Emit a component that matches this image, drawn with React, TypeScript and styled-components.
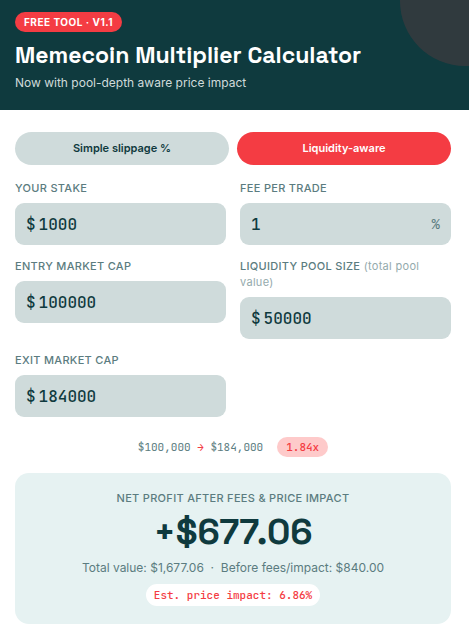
import React, { useState } from "react";
import styled, { createGlobalStyle } from "styled-components";

const teal = "#0f3a3e";
const red = "#f43c43";
const muted = "#5b7c80";
const mono = `"JetBrains Mono", "DejaVu Sans Mono", monospace`;
const display = `"Space Grotesk", Inter, sans-serif`;

const GlobalStyle = createGlobalStyle`
  *, *::before, *::after { box-sizing: border-box; }
  body {
    margin: 0;
    background: #fff;
    color: ${teal};
    font-family: Inter, sans-serif;
  }
`;

const Header = styled.header`
  position: relative;
  overflow: hidden;
  padding: 12px 18px 18px 15px;
  background: ${teal};
  color: #fff;

  &::after {
    content: "";
    position: absolute;
    top: -64px;
    right: -61px;
    width: 130px;
    height: 130px;
    border-radius: 50%;
    background: ${red};
    opacity: 0.15;
  }
`;

const Badge = styled.span`
  display: inline-block;
  padding: 0 9px;
  border-radius: 10px;
  background: ${red};
  font-size: 10px;
  font-weight: 700;
  line-height: 20px;
  letter-spacing: 0.5px;
  vertical-align: top;
`;

const Title = styled.h1`
  margin: 8px 0 4px;
  font-family: ${display};
  font-size: 23px;
  font-weight: 700;
  line-height: 30px;
`;

const Subtitle = styled.p`
  margin: 0;
  color: #cfdbdb;
  font-size: 12px;
  line-height: 18px;
`;

const Body = styled.main`
  padding: 22px 18px 9px 15px;
`;

const Modes = styled.div`
  display: grid;
  grid-template-columns: 1fr 1fr;
  gap: 8px;
  margin-bottom: 15px;
`;

const ModeButton = styled.button<{ $active: boolean }>`
  height: 33px;
  padding: 0 12px 2px;
  border: 0;
  border-radius: 17px;
  background: ${(p) => (p.$active ? red : "#cfdbdb")};
  color: ${(p) => (p.$active ? "#fff" : teal)};
  font: 600 11px Inter, sans-serif;
  cursor: pointer;
`;

const Fields = styled.div`
  display: grid;
  grid-template-columns: repeat(2, minmax(0, 1fr));
  align-items: start;
  gap: 13px 14px;
`;

const FieldLabel = styled.label`
  display: block;
  margin-bottom: 7px;
  color: ${muted};
  font-size: 11px;
  font-weight: 500;
  line-height: 16px;
  letter-spacing: 0.3px;
`;

const Hint = styled.span`
  color: #94aaac;
  font-weight: 400;
`;

const InputBox = styled.div`
  display: flex;
  align-items: center;
  gap: 3px;
  height: 42px;
  padding: 0 11px;
  border-radius: 9px;
  background: #cfdbdb;
  font-family: ${mono};
  font-size: 16px;
  font-weight: 500;
`;

const Suffix = styled.span`
  color: ${muted};
  font-size: 14px;
  font-weight: 400;
`;

const Input = styled.input`
  flex: 1;
  min-width: 0;
  padding: 0;
  border: 0;
  outline: 0;
  background: transparent;
  color: ${teal};
  font: inherit;
`;

const Summary = styled.div`
  display: flex;
  align-items: center;
  justify-content: center;
  gap: 14px;
  margin: 20px 0 16px;
  color: ${muted};
  font-family: ${mono};
  font-size: 11px;
  line-height: 20px;
`;

const Arrow = styled.span`
  color: ${red};
`;

const Multiple = styled.span`
  padding: 0 9px;
  border-radius: 10px;
  background: #fecaca;
  color: ${red};
  font-size: 11px;
  font-weight: 500;
`;

const Result = styled.section`
  display: flex;
  flex-direction: column;
  align-items: center;
  padding: 17px 16px 18px;
  border-radius: 14px;
  background: #e6f2f2;
  text-align: center;
`;

const ResultLabel = styled.h2`
  margin: 0;
  color: ${muted};
  font-size: 11px;
  font-weight: 500;
  line-height: 16px;
  letter-spacing: 0.3px;
`;

const Amount = styled.output`
  font-family: ${display};
  font-size: 36px;
  font-weight: 700;
  line-height: 52px;
`;

const Totals = styled.p`
  margin: 0 0 7px;
  color: ${muted};
  font-size: 12px;
  line-height: 19px;
`;

const Impact = styled.span`
  padding: 0 8px;
  border-radius: 11px;
  background: #fff;
  color: ${red};
  font-family: ${mono};
  font-size: 11px;
  font-weight: 500;
  line-height: 22px;
`;

type FieldProps = {
  id: string;
  label: string;
  initial: string;
  hint?: string;
  prefix?: string;
  suffix?: string;
};

function Field({ id, label, initial, hint, prefix, suffix }: FieldProps) {
  const [value, setValue] = useState(initial);
  return (
    <div>
      <FieldLabel htmlFor={id}>
        {label}
        {hint && <Hint> {hint}</Hint>}
      </FieldLabel>
      <InputBox>
        {prefix && <span>{prefix}</span>}
        <Input
          id={id}
          inputMode="decimal"
          value={value}
          onChange={(e) => setValue(e.target.value)}
        />
        {suffix && <Suffix>{suffix}</Suffix>}
      </InputBox>
    </div>
  );
}

export default function App() {
  const [mode, setMode] = useState("liquidity");
  return (
    <>
      <GlobalStyle />
      <Header>
        <Badge>FREE TOOL · V1.1</Badge>
        <Title>Memecoin Multiplier Calculator</Title>
        <Subtitle>Now with pool-depth aware price impact</Subtitle>
      </Header>
      <Body>
        <Modes>
          <ModeButton
            type="button"
            $active={mode === "simple"}
            aria-pressed={mode === "simple"}
            onClick={() => setMode("simple")}
          >
            Simple slippage %
          </ModeButton>
          <ModeButton
            type="button"
            $active={mode === "liquidity"}
            aria-pressed={mode === "liquidity"}
            onClick={() => setMode("liquidity")}
          >
            Liquidity-aware
          </ModeButton>
        </Modes>
        <Fields>
          <Field id="stake" label="YOUR STAKE" initial="1000" prefix="$" />
          <Field id="fee" label="FEE PER TRADE" initial="1" suffix="%" />
          <Field id="entry" label="ENTRY MARKET CAP" initial="100000" prefix="$" />
          <Field
            id="pool"
            label="LIQUIDITY POOL SIZE"
            hint="(total pool value)"
            initial="50000"
            prefix="$"
          />
          <Field id="exit" label="EXIT MARKET CAP" initial="184000" prefix="$" />
        </Fields>
        <Summary>
          <span>
            $100,000 <Arrow>→</Arrow> $184,000
          </span>
          <Multiple>1.84x</Multiple>
        </Summary>
        <Result>
          <ResultLabel>NET PROFIT AFTER FEES &amp; PRICE IMPACT</ResultLabel>
          <Amount>+$677.06</Amount>
          <Totals>Total value: $1,677.06 &nbsp;·&nbsp; Before fees/impact: $840.00</Totals>
          <Impact>Est. price impact: 6.86%</Impact>
        </Result>
      </Body>
    </>
  );
}
